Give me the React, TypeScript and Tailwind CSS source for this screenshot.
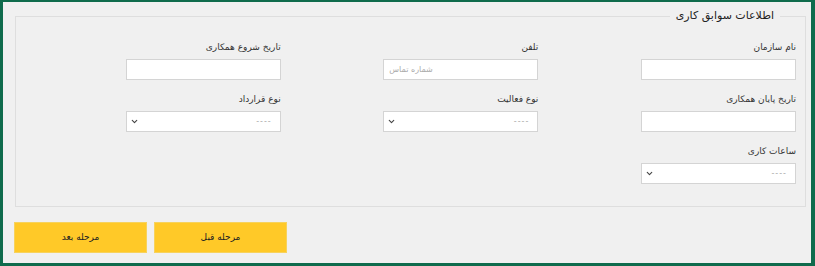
import { ChevronDown } from 'lucide-react'

type Field = { label: string; kind: 'input' | 'select'; placeholder?: string; ltr?: boolean }

// RTL order: first item sits on the right
const rows: (Field | null)[][] = [
  [
    { label: 'نام سازمان', kind: 'input' },
    { label: 'تلفن', kind: 'input', placeholder: 'شماره تماس', ltr: true },
    { label: 'تاریخ شروع همکاری', kind: 'input' },
  ],
  [
    { label: 'تاریخ پایان همکاری', kind: 'input' },
    { label: 'نوع فعالیت', kind: 'select' },
    { label: 'نوع قرارداد', kind: 'select' },
  ],
  [{ label: 'ساعات کاری', kind: 'select' }, null, null],
]

function FormField({ field }: { field: Field }) {
  return (
    <div className="flex w-[155px] flex-col">
      <label className="mb-[5px] h-[14px] text-[9px] leading-[14px] text-[#333]">{field.label}</label>
      {field.kind === 'input' ? (
        <input
          type="text"
          placeholder={field.placeholder}
          className={`h-[21px] w-full border border-[#d4d4d4] bg-white px-[5px] text-[8px] text-[#333] outline-none placeholder:text-[#aaa] ${field.ltr ? 'text-left' : ''}`}
        />
      ) : (
        <div className="flex h-[21px] w-full items-center justify-between border border-[#d4d4d4] bg-white pr-[8px] pl-[3px]">
          <span className="text-[8px] leading-none tracking-[1px] text-[#aaa]">----</span>
          <ChevronDown size={9} strokeWidth={3} className="text-[#444]" />
        </div>
      )}
    </div>
  )
}

export default function App() {
  return (
    <div
      dir="rtl"
      className="h-[266px] w-[815px] border-t-[2px] border-r-[4px] border-b-[3px] border-l-[3px] border-[#0f6b4c] bg-[#f0f0f0] font-['DejaVu_Sans',sans-serif]"
    >
      <fieldset className="mt-[6px] mr-[5px] ml-[12px] h-[199px] border border-[#dedede] pr-[9px] pl-[7px]">
        <legend className="mr-[16px] px-[6px] text-[11px] leading-[16px] text-[#222]">اطلاعات سوابق کاری</legend>
        <div className="mt-[16px] flex flex-col gap-[12px]">
          {rows.map((row, i) => (
            <div key={i} className="grid grid-cols-3">
              {row.map((field, j) => (
                <div key={j}>{field && <FormField field={field} />}</div>
              ))}
            </div>
          ))}
        </div>
      </fieldset>

      <div dir="ltr" className="mt-[15px] ml-[11px] flex gap-[7px]">
        <button
          type="button"
          className="h-[31px] w-[133px] border border-[#f7d25c] bg-[#ffc928] text-[9px] text-[#222]"
        >
          مرحله بعد
        </button>
        <button
          type="button"
          className="h-[31px] w-[133px] border border-[#f7d25c] bg-[#ffc928] text-[9px] text-[#222]"
        >
          مرحله قبل
        </button>
      </div>
    </div>
  )
}
